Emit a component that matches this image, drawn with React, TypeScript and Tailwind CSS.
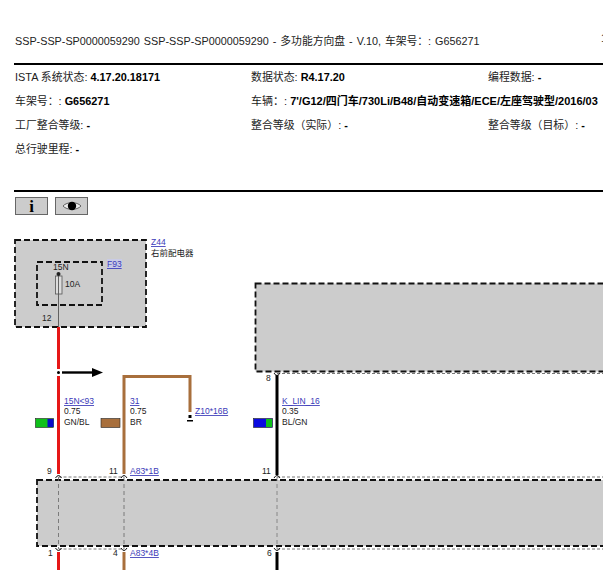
const font = '[font-family:"Liberation_Sans","Noto_Sans_CJK_SC",sans-serif]';

const LINK = '#3a3ab8';
const TXT = '#222222';

function InfoRow({ items }: { items: { label: string; value: string; x: string }[] }) {
  return (
    <div className="flex h-6 items-center whitespace-nowrap">
      {items.map((it) => (
        <span key={it.label} className={it.x}>
          {it.label} <b className="text-black">{it.value}</b>
        </span>
      ))}
    </div>
  );
}

function Label({ x, y, children, link }: { x: number; y: number; children: string; link?: boolean }) {
  return (
    <text
      x={x}
      y={y}
      fontSize={8.5}
      fill={link ? LINK : TXT}
      textDecoration={link ? 'underline' : undefined}
    >
      {children}
    </text>
  );
}

// little hat where a wire enters a connector
function Pin({ x, y, up }: { x: number; y: number; up?: boolean }) {
  const d = up ? `M${x - 3} ${y + 2} Q${x} ${y - 3} ${x + 3} ${y + 2}` : `M${x - 3} ${y - 2} Q${x} ${y + 3} ${x + 3} ${y - 2}`;
  return <path d={d} fill="none" stroke="#111" strokeWidth={1} />;
}

function Diagram() {
  return (
    <svg viewBox="0 225 603 345" width={603} height={345} className="block" fontFamily='"Liberation Sans","Noto Sans CJK SC",sans-serif'>
      {/* Z44 / F93 */}
      <rect x={15} y={240} width={131} height={87} fill="#cccccc" stroke="#111" strokeWidth={1.8} strokeDasharray="6 3" />
      <rect x={37} y={262} width={65} height={43} fill="none" stroke="#111" strokeWidth={1.8} strokeDasharray="6 3" />
      <rect x={55.5} y={276} width={6.5} height={18} fill="#dddddd" stroke="#555" strokeWidth={0.8} />
      <line x1={58.5} y1={274} x2={58.5} y2={327} stroke="#555" strokeWidth={0.9} />
      <circle cx={58.5} cy={274} r={2} fill="#222" />
      <Label x={53} y={270}>15N</Label>
      <Label x={65} y={287}>10A</Label>
      <Label x={42} y={321}>12</Label>
      <rect x={107} y={259} width={15} height={10} fill="#c9cbe6" />
      <Label x={107} y={267} link>F93</Label>
      <Label x={151} y={245} link>Z44</Label>
      <text x={151} y={256} fontSize={8.5} fill={TXT}>右前配电器</text>

      {/* gray modules */}
      <rect x={255.5} y={283.5} width={360} height={88} fill="#cccccc" stroke="#111" strokeWidth={1.8} strokeDasharray="6 3" />
      <rect x={37} y={480} width={580} height={66} fill="#cccccc" stroke="#111" strokeWidth={1.8} strokeDasharray="6 3" />

      {/* wires */}
      <line x1={58.5} y1={327} x2={58.5} y2={474} stroke="#e61717" strokeWidth={3} />
      <line x1={58.5} y1={552} x2={58.5} y2={570} stroke="#e61717" strokeWidth={3} />
      <path d="M124 474V376.5H190V412" fill="none" stroke="#a86f3c" strokeWidth={3} />
      <line x1={124} y1={552} x2={124} y2={570} stroke="#a86f3c" strokeWidth={3} />
      <line x1={277} y1={375} x2={277} y2={475} stroke="#000" strokeWidth={3} />
      <line x1={277} y1={552} x2={277} y2={570} stroke="#000" strokeWidth={3} />

      {/* continuity arrow */}
      <rect x={56.5} y={369} width={4} height={7} fill="#fff" />
      <circle cx={58.5} cy={372.5} r={1.5} fill="#000" />
      <line x1={62} y1={372.5} x2={93} y2={372.5} stroke="#000" strokeWidth={2.4} />
      <polygon points="92,368 103,372.5 92,377" fill="#000" />

      {/* Z10 end */}
      <rect x={188.5} y={415} width={3} height={3} fill="#000" />
      <rect x={187} y={420} width={6} height={1.5} fill="#000" />
      <Label x={195} y={414} link>Z10*16B</Label>

      {/* wire labels */}
      <Label x={64} y={404} link>15N&lt;93</Label>
      <Label x={64} y={414}>0.75</Label>
      <Label x={64} y={425}>GN/BL</Label>
      <rect x={35.5} y={418.5} width={18} height={9} fill="#0fc01a" stroke="#222" strokeWidth={0.6} />
      <rect x={47.5} y={419} width={6} height={8} fill="#0a0ac8" />
      <Label x={130} y={404} link>31</Label>
      <Label x={130} y={414}>0.75</Label>
      <Label x={130} y={425}>BR</Label>
      <rect x={101} y={418.5} width={19} height={9} fill="#a86f3c" stroke="#222" strokeWidth={0.6} />
      <Label x={282} y={404} link>K_LIN_16</Label>
      <Label x={282} y={414}>0.35</Label>
      <Label x={282} y={425}>BL/GN</Label>
      <rect x={253.5} y={418.5} width={19} height={9} fill="#0a0ae0" stroke="#222" strokeWidth={0.6} />
      <rect x={266} y={419} width={6} height={8} fill="#0fc01a" />

      {/* connector links */}
      <line x1={58.5} y1={477} x2={124} y2={477} stroke="#555" strokeWidth={0.8} strokeDasharray="3 2" />
      <line x1={58.5} y1={549} x2={124} y2={549} stroke="#555" strokeWidth={0.8} strokeDasharray="3 2" />
      <line x1={58.5} y1={477} x2={58.5} y2={549} stroke="#666" strokeWidth={0.8} strokeDasharray="4 3" />
      <line x1={124} y1={477} x2={124} y2={549} stroke="#666" strokeWidth={0.8} strokeDasharray="4 3" />
      <line x1={277} y1={477} x2={277} y2={549} stroke="#777" strokeWidth={0.8} strokeDasharray="4 3" />
      <line x1={277} y1={477} x2={603} y2={477} stroke="#555" strokeWidth={0.8} strokeDasharray="3 2" />
      <line x1={277} y1={549} x2={603} y2={549} stroke="#555" strokeWidth={0.8} strokeDasharray="3 2" />
      <line x1={277} y1={373.5} x2={603} y2={373.5} stroke="#555" strokeWidth={0.8} strokeDasharray="3 2" />
      <Pin x={58.5} y={476} up />
      <Pin x={124} y={476} up />
      <Pin x={277} y={476} up />
      <Pin x={58.5} y={550} />
      <Pin x={124} y={550} />
      <Pin x={277} y={550} />
      <Pin x={277} y={375} />

      <Label x={47} y={474}>9</Label>
      <Label x={109} y={474}>11</Label>
      <Label x={262} y={474}>11</Label>
      <Label x={266} y={381}>8</Label>
      <Label x={48} y={556}>1</Label>
      <Label x={113} y={556}>4</Label>
      <Label x={267} y={556}>6</Label>
      <Label x={130} y={474} link>A83*1B</Label>
      <Label x={130} y={556} link>A83*4B</Label>
    </svg>
  );
}

export default function App() {
  return (
    <div className={`h-[570px] w-[603px] overflow-hidden bg-white text-[10.9px] text-[#222] ${font}`}>
      <div className="relative flex h-[63px] items-end whitespace-nowrap pb-[14px] pl-[15px] text-[10.8px] [word-spacing:1px]">
        SSP-SSP-SP0000059290 SSP-SSP-SP0000059290 - 多功能方向盘 - V.10, 车架号：: G656271
        <span className="absolute bottom-[17px] left-[601px]">1</span>
      </div>
      <div className="ml-[14px] border-t-2 border-black pb-[29px] pl-px">
        <InfoRow
          items={[
            { label: 'ISTA 系统状态:', value: '4.17.20.18171', x: 'w-[236px]' },
            { label: '数据状态:', value: 'R4.17.20', x: 'w-[237px]' },
            { label: '编程数据:', value: '-', x: '' },
          ]}
        />
        <InfoRow
          items={[
            { label: '车架号：:', value: 'G656271', x: 'w-[236px]' },
            { label: '车辆：:', value: "7'/G12/四门车/730Li/B48/自动变速箱/ECE/左座驾驶型/2016/03", x: 'text-[11px]' },
          ]}
        />
        <InfoRow
          items={[
            { label: '工厂整合等级:', value: '-', x: 'w-[236px]' },
            { label: '整合等级（实际）:', value: '-', x: 'w-[237px]' },
            { label: '整合等级（目标）:', value: '-', x: '' },
          ]}
        />
        <InfoRow items={[{ label: '总行驶里程:', value: '-', x: '' }]} />
      </div>
      <div className="ml-[14px] flex gap-[7px] border-t-2 border-black pl-px pt-[5px]">
        <button type="button" className="flex h-[18px] w-[33px] items-center justify-center border border-[#666] bg-[#ccc] font-['Liberation_Serif',serif] text-[17px] font-bold leading-none text-black">
          i
        </button>
        <button type="button" className="flex h-[18px] w-[33px] items-center justify-center border border-[#666] bg-[#ccc]">
          <svg width="20" height="10" viewBox="0 0 20 10">
            <path d="M1 5C5 0.5 15 0.5 19 5C15 9.5 5 9.5 1 5Z" fill="#eee" stroke="#444" strokeWidth="0.8" />
            <circle cx="10" cy="5" r="4.2" fill="#000" />
          </svg>
        </button>
      </div>
      <div className="mt-[10px]">
        <Diagram />
      </div>
    </div>
  );
}
